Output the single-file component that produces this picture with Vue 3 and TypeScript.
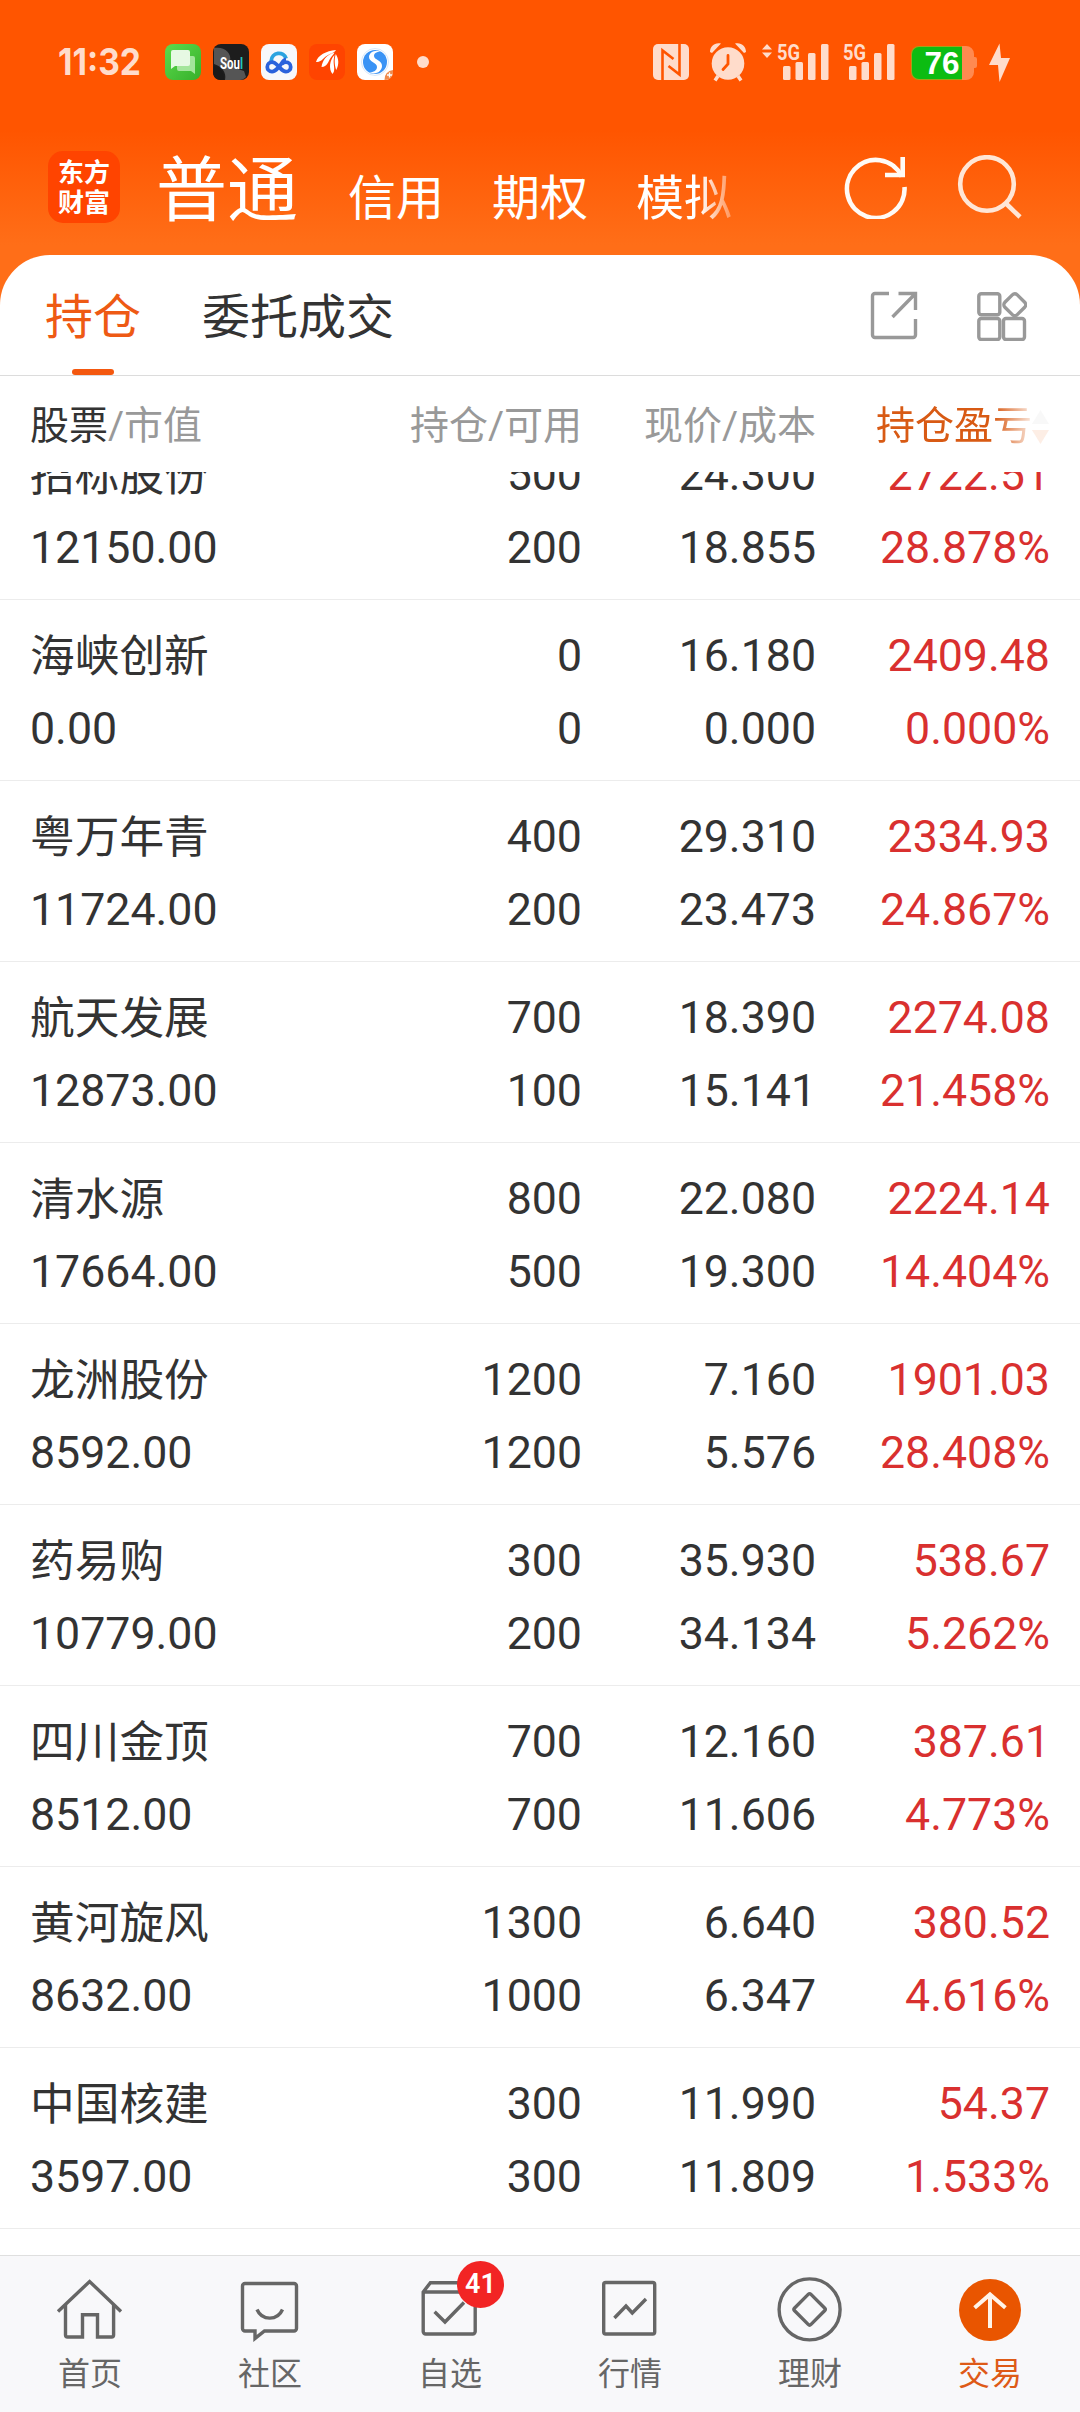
<script setup lang="ts">
interface Holding {
  name: string
  value: string
  held: string
  usable: string
  price: string
  cost: string
  profit: string
  rate: string
}

const row = (
  name: string, value: string, held: string, usable: string,
  price: string, cost: string, profit: string, rate: string,
): Holding => ({ name, value, held, usable, price, cost, profit, rate })

const holdings: Holding[] = [
  row('招标股份', '12150.00', '500', '200', '24.300', '18.855', '2722.51', '28.878%'),
  row('海峡创新', '0.00', '0', '0', '16.180', '0.000', '2409.48', '0.000%'),
  row('粤万年青', '11724.00', '400', '200', '29.310', '23.473', '2334.93', '24.867%'),
  row('航天发展', '12873.00', '700', '100', '18.390', '15.141', '2274.08', '21.458%'),
  row('清水源', '17664.00', '800', '500', '22.080', '19.300', '2224.14', '14.404%'),
  row('龙洲股份', '8592.00', '1200', '1200', '7.160', '5.576', '1901.03', '28.408%'),
  row('药易购', '10779.00', '300', '200', '35.930', '34.134', '538.67', '5.262%'),
  row('四川金顶', '8512.00', '700', '700', '12.160', '11.606', '387.61', '4.773%'),
  row('黄河旋风', '8632.00', '1300', '1000', '6.640', '6.347', '380.52', '4.616%'),
  row('中国核建', '3597.00', '300', '300', '11.990', '11.809', '54.37', '1.533%'),
]

const navItems: string[] = ['首页', '社区', '自选', '行情', '理财', '交易']
</script>

<template>
  <div class="screen">
    <header class="top">
      <div class="status">
        <div class="status-left">
          <svg class="clock" width="107" height="50" viewBox="0 -7 107 50">
            <text x="0" y="31" textLength="83" lengthAdjust="spacingAndGlyphs">11:32</text>
          </svg>
          <svg width="36" height="36" viewBox="0 0 36 36">
            <defs>
              <linearGradient id="msg" x1="0" y1="0" x2="1" y2="1">
                <stop offset="0" stop-color="#5cdb4c" /><stop offset="1" stop-color="#36b02b" />
              </linearGradient>
            </defs>
            <rect width="36" height="36" rx="8" fill="url(#msg)" />
            <path d="M15 12h13a2 2 0 0 1 2 2v16l-4-3H14a2 2 0 0 1-2-2V14z" fill="#a3e59b" />
            <path d="M8 6h15a2 2 0 0 1 2 2v12a2 2 0 0 1-2 2H10l-4 3V8a2 2 0 0 1 2-2z" fill="#e6f9e3" />
          </svg>
          <svg width="36" height="36" viewBox="0 0 36 36">
            <rect width="36" height="36" rx="8" fill="#1d1d1d" />
            <path d="M1 4c10-2 18 5 16 13 1 6 8 8 14 10l2 6c-2 2-4 3-6 3H12C14 28 8 22 1 20z" fill="#555" />
            <path d="M1 22c6 1 10 6 10 14H8c-5 0-8-3-8-8z" fill="#1a1a1a" />
            <text class="soul" x="7" y="24.500" textLength="23" lengthAdjust="spacingAndGlyphs">Sou<tspan class="teal">l</tspan></text>
          </svg>
          <svg width="36" height="36" viewBox="0 0 36 36">
            <rect width="36" height="36" rx="8" fill="#f7f8fb" />
            <path d="M10.300 18v-1.500a7.600 7.600 0 0 1 14.800-2" fill="none" stroke="#2ba3e0" stroke-width="3.800" />
            <path d="M21 19.800c1.200-1 2.500-1.600 4-1.600a4.700 4.700 0 0 1 0 9.400c-3 0-5-2.700-7-4.700s-4-4.700-7-4.700a4.700 4.700 0 0 0 0 9.400c3 0 5-2.700 7-4.700s4-7 7-7.400" fill="none" stroke="#2a62dc" stroke-width="3.800" />
          </svg>
          <svg width="36" height="36" viewBox="0 0 36 36">
            <rect width="36" height="36" rx="8" fill="#ff4400" />
            <path d="M7 18C9 11 17 7 27 6c-2 3-4 3-7 4.500C15 12.500 13 18 8 18zM12.500 23c1-7 5-12 13-14.500-1 2.500-2.500 3-4 5.500-2.500 4-3 8.500-9 9zM23.500 30c-4-5-3-14 2-19-.5 3-1 5-.8 8 .3 4.500 1.500 8-1.200 11zM26.800 10c3 5 3.500 10 .5 16-1.500-4-2.500-10-.5-16z" fill="#fff" />
          </svg>
          <svg width="36" height="36" viewBox="0 0 36 36">
            <rect width="36" height="36" rx="8" fill="#fff" />
            <circle cx="18" cy="18" r="13.500" fill="none" stroke="#d7e8fb" />
            <circle cx="18" cy="18" r="12" fill="#3a93f5" />
            <path d="M24 7.500c-6-2.500-12 1-12 5.500 0 5 8 5.500 8 10 0 3-3 5.500-8 5.500 7 3 13-1.500 13-6.500 0-6-8-6-8-10 0-3 3-4.500 7-4.500z" fill="#fff" />
            <path d="M36 26a9 9 0 0 0-8.500 10c5 0 8.500-3 8.500-8z" fill="#f08b4c" />
            <path d="M32.500 28.500v5M30 31h5" stroke="#fff" stroke-width="1.300" />
          </svg>
          <i class="dot"></i>
        </div>
        <div class="status-right">
          <svg width="36" height="40" viewBox="0 0 36 40">
            <rect y="2" width="36" height="36" rx="5" />
            <path d="M9.500 38V8.500L20.500 17M26.500 2v30.500L15.500 24" class="cut" stroke-width="2.600" />
          </svg>
          <svg class="alarm" width="38" height="40" viewBox="0 0 38 40">
            <circle cx="19" cy="21.500" r="16.300" />
            <path d="M1 10C1 4 6 0 12 1.500L3 11zM37 10c0-6-5-10-11-8.500L35 11z" />
            <path d="M9 34l-3 4.500M29 34l3 4.500" stroke="#ffdccb" stroke-width="3.500" />
            <path d="M19 13.500V22l-5 5.500" class="cut" stroke-width="2.800" stroke-linecap="round" />
          </svg>
          <svg class="signal" width="67" height="50" viewBox="0 -5 67 50">
            <path d="M0 7.500L5 2l5 5.500zM0 10.500h10L5 16z" />
            <text x="15" y="17.500" textLength="23" lengthAdjust="spacingAndGlyphs">5G</text>
            <rect x="21" y="24" width="7.500" height="14" rx="1.500" /><rect x="33.500" y="20" width="7.500" height="18" rx="1.500" />
            <rect x="46" y="11" width="7.500" height="27" rx="1.500" /><rect x="59" y="2" width="7.500" height="36" rx="1.500" />
          </svg>
          <svg class="signal second" width="52" height="50" viewBox="0 -5 52 50">
            <text x="0" y="17.500" textLength="23" lengthAdjust="spacingAndGlyphs">5G</text>
            <rect x="6" y="24" width="7.500" height="14" rx="1.500" /><rect x="18.500" y="20" width="7.500" height="18" rx="1.500" />
            <rect x="31" y="11" width="7.500" height="27" rx="1.500" /><rect x="44" y="2" width="7.500" height="36" rx="1.500" />
          </svg>
          <svg class="battery" width="67" height="40" viewBox="0 0 67 40">
            <path d="M51 4h4a8 8 0 0 1 8 8v3h1a2 2 0 0 1 2 2v7a2 2 0 0 1-2 2h-1v4a8 8 0 0 1-8 8h-4z" fill="#ff8a50" />
            <path d="M8 4h43v34H8a8 8 0 0 1-8-8V12a8 8 0 0 1 8-8z" fill="#a5a018" />
            <path d="M8 5h43v32H8a7 7 0 0 1-7-7V12a7 7 0 0 1 7-7z" fill="#0cbc12" />
            <text x="13.500" y="32" textLength="35" lengthAdjust="spacingAndGlyphs">76</text>
          </svg>
          <svg class="bolt" width="22" height="40" viewBox="0 0 22 40">
            <path d="M10.500 1.500L0 23h9l1.500 17L21 16h-9z" />
          </svg>
        </div>
      </div>
      <div class="nav-top">
        <div class="logo"><span>东方</span><span>财富</span></div>
        <div class="accounts">
          <span class="current">普通</span><span>信用</span><span>期权</span><span class="faded">模拟</span>
        </div>
        <svg class="refresh" width="66" height="66" viewBox="0 0 66 66">
          <path d="M59.800 23.500A28.800 29 0 1 0 62.500 34" />
          <path d="M60.700 4v18.500M43 22h20" />
        </svg>
        <svg class="search" width="66" height="66" viewBox="0 0 66 66">
          <circle cx="30" cy="29" r="26.800" /><path d="M49 48.500l14 13.500" />
        </svg>
      </div>
    </header>

    <main class="card">
      <div class="tabs">
        <div class="tab active">持仓</div>
        <div class="tab">委托成交</div>
        <svg class="tool" width="50" height="50" viewBox="0 0 50 50">
          <path d="M19 3.500H5a2.500 2.500 0 0 0-2.500 2.500v39A2.500 2.500 0 0 0 5 47.500h38a2.500 2.500 0 0 0 2.500-2.500V29M28.500 3.500h17V20M45.500 3.500L22.500 27" />
        </svg>
        <svg class="tool grid-icon" width="50" height="50" viewBox="0 0 50 50">
          <rect x="1.800" y="2.800" width="21" height="21" rx="2.500" />
          <rect x="1.800" y="27.500" width="21" height="21" rx="2.500" />
          <rect x="26.500" y="27.500" width="21" height="21" rx="2.500" />
          <rect x="29" y="5" width="17.500" height="17.500" rx="3.500" transform="rotate(45 37.800 13.800)" />
        </svg>
      </div>
      <div class="cols head">
        <div><b>股票</b>/市值</div>
        <div>持仓/可用</div>
        <div>现价/成本</div>
        <div class="sorted">
          持仓盈亏<svg width="17" height="36" viewBox="0 0 17 36"><path d="M8.500 1L17 15H0z" fill="#bbb" /><path d="M0 21h17L8.500 35z" fill="#e85500" /></svg>
        </div>
      </div>
      <div class="list">
        <div v-for="h in holdings" :key="h.name" class="cols item">
          <div><p class="name">{{ h.name }}</p><p>{{ h.value }}</p></div>
          <div><p>{{ h.held }}</p><p>{{ h.usable }}</p></div>
          <div><p>{{ h.price }}</p><p>{{ h.cost }}</p></div>
          <div class="up"><p>{{ h.profit }}</p><p>{{ h.rate }}</p></div>
        </div>
      </div>
    </main>

    <nav class="bottom">
      <div v-for="(label, i) in navItems" :key="label" class="nav-item" :class="{ on: i === 5 }">
        <svg width="72" height="72" viewBox="0 0 72 72">
          <g v-if="i === 0">
            <path d="M4 37.500L35.600 7.500 67 37.500" /><path d="M11.500 31v30a2 2 0 0 0 2 2h15V40.700h15V63H57.600a2 2 0 0 0 2-2V31" />
          </g>
          <g v-else-if="i === 1">
            <path d="M11 9.500h49a2.500 2.500 0 0 1 2.500 2.500v42.500A2.500 2.500 0 0 1 60 57H30.500l-9.500 7.500V57H11a2.500 2.500 0 0 1-2.500-2.500V12A2.500 2.500 0 0 1 11 9.500z" />
            <path d="M23 35.500c5 11.500 20.500 11.500 25.500 0" />
          </g>
          <g v-else-if="i === 2">
            <path d="M9.200 18h52v39.500a2.500 2.500 0 0 1-2.500 2.500h-47a2.500 2.500 0 0 1-2.500-2.500V18l7.200-9.300H54l7.200 9.300" /><path d="M20.600 37.700L31 48l19-19.500" />
          </g>
          <g v-else-if="i === 3">
            <rect x="9.700" y="8.500" width="51" height="51.500" rx="2" /><path d="M20.400 44L32 32l6.300 7L52 25" />
          </g>
          <g v-else-if="i === 4">
            <circle cx="35.600" cy="35.400" r="30.500" /><rect x="24" y="23.800" width="23.200" height="23.200" rx="2" transform="rotate(45 35.600 35.400)" />
          </g>
          <g v-else>
            <circle cx="36" cy="36" r="31" class="disc" /><path d="M20.600 33.700L36 20.500l15.400 13.200M36 20.500V54" class="arrow" />
          </g>
        </svg>
        <span>{{ label }}</span>
        <em v-if="i === 2">41</em>
      </div>
    </nav>
  </div>
</template>

<style>
body { margin: 0; background: #fff; }
</style>

<style scoped>
.screen {
  width: 1080px;
  height: 2412px;
  display: flex;
  flex-direction: column;
  overflow: hidden;
  font-family: Roboto, "Noto Sans CJK SC", sans-serif;
  color: #333;
  background: linear-gradient(#ff5500 0, #ff5500 130px, #ff6e18 245px, #ff6e18 310px, #fff 311px);
}
.top { height: 255px; flex: none; }
svg { display: block; flex: none; }
.status { height: 124px; display: flex; justify-content: space-between; align-items: center; box-sizing: border-box; }
.status-left { display: flex; align-items: center; gap: 12px; padding-left: 58px; }
.status-left .clock { margin-right: -12px; }
.clock text { font: 700 37px Inter, sans-serif; fill: #ffdccb; }
.soul { font: 700 17px Roboto, sans-serif; fill: #fff; }
.teal { fill: #22c7c2; }
.dot { width: 12px; height: 12px; border-radius: 50%; background: #ffdccb; margin-left: 12px; }
.status-right { display: flex; align-items: center; padding-right: 69px; fill: #ffdccb; }
.cut { stroke: #ff5500; fill: none; }
.alarm { margin-left: 20px; }
.signal { margin-left: 15px; }
.signal.second { margin-left: 14px; }
.signal text { font: 700 22px Roboto, sans-serif; }
.battery { margin-left: 16px; }
.battery text { font: 700 31px "Liberation Sans", sans-serif; fill: #fff; }
.bolt { margin-left: 11px; }

.nav-top { height: 131px; display: flex; padding-left: 48px; align-items: flex-start; }
.logo {
  width: 72px; height: 72px; margin-top: 27px; box-sizing: border-box; padding-top: 5px;
  border-radius: 15px; background: #ff4400; color: #fff;
  display: flex; flex-direction: column; align-items: center;
  font: 700 26px/30px "Noto Sans CJK SC", sans-serif;
}
.accounts { display: flex; align-items: baseline; gap: 48px; margin-left: 36px; margin-top: 12px; width: 686px; color: #fff; font-size: 48px; line-height: 110px; }
.accounts .current { font-size: 71px; width: 144px; white-space: nowrap; }
.faded { -webkit-mask-image: linear-gradient(90deg, #000 66%, rgba(0, 0, 0, .3)); mask-image: linear-gradient(90deg, #000 66%, rgba(0, 0, 0, .3)); }
.refresh, .search { fill: none; stroke: #fffaf5; stroke-width: 4.600; margin-top: 31px; }
.refresh { margin-top: 29px; }
.search { stroke: #ffe6d6; margin-left: 49px; }

.card { flex: 1; min-height: 0; display: flex; flex-direction: column; background: #fff; border-radius: 50px 50px 0 0; overflow: hidden; }
.tabs { height: 121px; flex: none; box-sizing: border-box; border-bottom: 1px solid #dcdcdc; display: flex; align-items: center; padding: 0 53px 0 45px; }
.tab { font-size: 48px; line-height: 126px; height: 120px; margin-right: 61px; }
.tab.active { color: #ee5a14; display: flex; flex-direction: column; align-items: center; }
.tab.active::after { content: ""; width: 42px; height: 6px; border-radius: 3px; background: #f4580f; margin-top: -12px; flex: none; }
.tool { fill: none; stroke: #999; stroke-width: 3.400; margin-left: auto; margin-top: -1px; }
.grid-icon { margin-left: 57px; margin-top: 1px; }

.cols { display: grid; grid-template-columns: 300px 252px 234px 234px; padding: 0 30px; }
.cols > div { text-align: right; white-space: nowrap; }
.cols > div:first-child { text-align: left; }
.head { height: 96px; flex: none; font-size: 39px; line-height: 101px; color: #999; }
.head b { font-weight: 400; color: #333; }
.head .sorted {
  color: #d85a14; display: flex; align-items: center; justify-content: flex-end; height: 101px; padding-right: 1px;
  -webkit-mask-image: linear-gradient(90deg, #000 76%, rgba(0, 0, 0, .1) 93%);
  mask-image: linear-gradient(90deg, #000 76%, rgba(0, 0, 0, .1) 93%);
}
.list { flex: 1; min-height: 0; overflow: hidden; display: flex; flex-direction: column; }
.item { height: 180px; flex: none; border-bottom: 1px solid #ececec; }
.item:first-child { margin-top: -53px; }
.item > div { padding-top: 20px; }
.item p { margin: 0; height: 73px; line-height: 73px; font-size: 44.700px; }
.item .name { line-height: 75px; }
.up { color: #d9302f; }

.bottom { height: 156px; flex: none; border-top: 1px solid #dfdfdf; background: #f8f8fa; display: flex; }
.nav-item { flex: 1; position: relative; display: flex; flex-direction: column; align-items: center; padding-top: 18px; font-size: 32px; color: #666; }
.nav-item svg { fill: none; stroke: #666; stroke-width: 3.400; }
.nav-item span { line-height: 48px; margin-top: 4px; }
.nav-item .disc { fill: #e95500; stroke: none; }
.nav-item .arrow { stroke: #fff4e8; stroke-width: 4; }
.on { color: #de5a17; }
.nav-item em {
  position: absolute; left: 97px; top: 5px; width: 47px; height: 47px; border-radius: 50%;
  background: #f22424; color: #fff; font: 600 27px/47px Roboto, sans-serif; text-align: center;
}
</style>
